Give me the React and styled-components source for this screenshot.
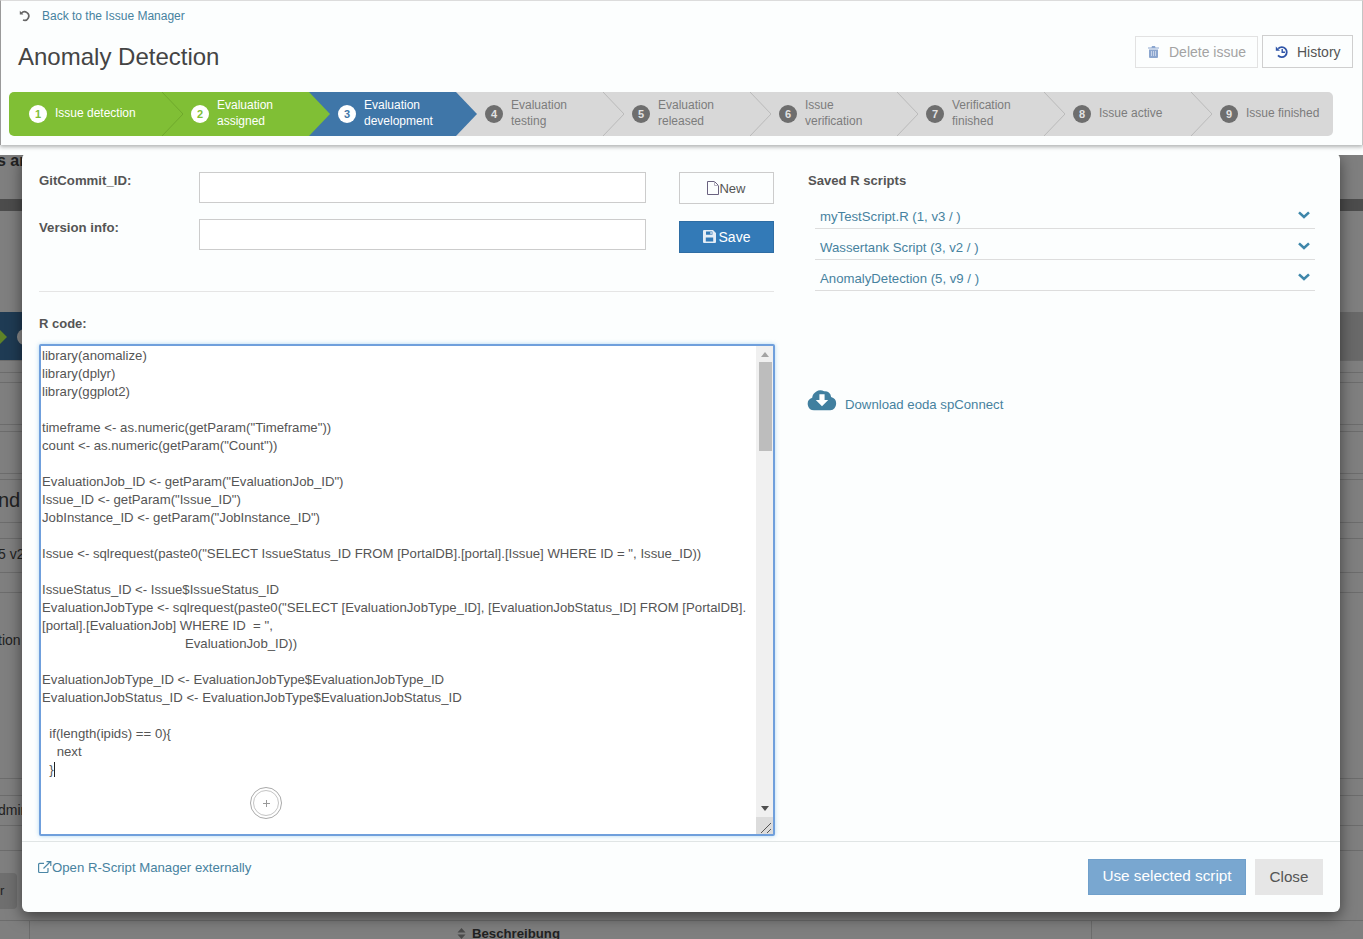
import React from 'react'
import styled, { createGlobalStyle } from 'styled-components'

const GlobalStyle = createGlobalStyle`
  html, body { margin: 0; padding: 0; height: 100%; overflow: hidden; background: #7f7f7f; }
  * { box-sizing: border-box; }
  body { font-family: "Liberation Sans", Arial, sans-serif; font-size: 14px; color: #555; }
`

const steps = [
  { n: 1, label: ['Issue detection'], state: 'done' },
  { n: 2, label: ['Evaluation', 'assigned'], state: 'done' },
  { n: 3, label: ['Evaluation', 'development'], state: 'active' },
  { n: 4, label: ['Evaluation', 'testing'], state: 'todo' },
  { n: 5, label: ['Evaluation', 'released'], state: 'todo' },
  { n: 6, label: ['Issue', 'verification'], state: 'todo' },
  { n: 7, label: ['Verification', 'finished'], state: 'todo' },
  { n: 8, label: ['Issue active'], state: 'todo' },
  { n: 9, label: ['Issue finished'], state: 'todo' },
]

const scripts = ['myTestScript.R (1, v3 / )', 'Wassertank Script (3, v2 / )', 'AnomalyDetection (5, v9 / )']

const dimRules = [360, 372, 382, 424, 431, 473, 479, 522, 538, 572, 592, 778, 795, 825, 850, 920]

const code = `library(anomalize)
library(dplyr)
library(ggplot2)

timeframe <- as.numeric(getParam("Timeframe"))
count <- as.numeric(getParam("Count"))

EvaluationJob_ID <- getParam("EvaluationJob_ID")
Issue_ID <- getParam("Issue_ID")
JobInstance_ID <- getParam("JobInstance_ID")

Issue <- sqlrequest(paste0("SELECT IssueStatus_ID FROM [PortalDB].[portal].[Issue] WHERE ID = ", Issue_ID))

IssueStatus_ID <- Issue$IssueStatus_ID
EvaluationJobType <- sqlrequest(paste0("SELECT [EvaluationJobType_ID], [EvaluationJobStatus_ID] FROM [PortalDB].
[portal].[EvaluationJob] WHERE ID  = ",
                                       EvaluationJob_ID))

EvaluationJobType_ID <- EvaluationJobType$EvaluationJobType_ID
EvaluationJobStatus_ID <- EvaluationJobType$EvaluationJobStatus_ID

  if(length(ipids) == 0){
    next
  }`

function UndoIcon({ size = 14, color = '#666' }) {
  return (
    <svg width={size} height={size} viewBox="0 0 14 14" fill="none" stroke={color} strokeWidth="1.7">
      <path d="M3.4 4.3A4.2 4.2 0 1 1 5 11" />
      <path d="M1.8 1.8v3.6h3.6" fill={color} stroke="none" />
    </svg>
  )
}

function HistoryIcon() {
  return (
    <svg width="14" height="14" viewBox="0 0 14 14" fill="none">
      <path d="M3.2 3.6A5 5 0 1 1 3 10.4" stroke="#2f55a8" strokeWidth="1.8" />
      <path d="M0.8 1.6v4.2H5z" fill="#2f55a8" />
      <path d="M7.2 4v3.3H10" stroke="#2f55a8" strokeWidth="1.4" />
    </svg>
  )
}

function TrashIcon() {
  return (
    <svg width="11" height="12" viewBox="0 0 11 12">
      <path d="M4 0h3l.5 1.4H11v1.2H0V1.4h3.5z" fill="#8ba6cf" />
      <path d="M1 3.4h9V11a1 1 0 0 1-1 1H2a1 1 0 0 1-1-1z" fill="#8ba6cf" />
      <path d="M3.5 5v5M5.5 5v5M7.5 5v5" stroke="#dfe7f3" strokeWidth=".7" />
    </svg>
  )
}

function FileIcon() {
  return (
    <svg width="12" height="14" viewBox="0 0 12 14" fill="none" stroke="#6a6280" strokeWidth="1">
      <path d="M.5.5h7l4 4v9H.5z" />
      <path d="M7.5.5v4h4" stroke="#b5b0c0" />
    </svg>
  )
}

function SaveIcon() {
  return (
    <svg width="13" height="13" viewBox="0 0 13 13">
      <path fillRule="evenodd" d="M1 0h9l3 3v9a1 1 0 0 1-1 1H1a1 1 0 0 1-1-1V1a1 1 0 0 1 1-1zm2 1.4v3.4h6.4V1.4zM2.8 7.4v4.2h7.4V7.4z" fill="#e4edf6" />
      <path d="M7.4 1.9h1.3v2.3H7.4z" fill="#e4edf6" />
    </svg>
  )
}

function ChevronIcon() {
  return (
    <svg width="12" height="8" viewBox="0 0 12 8" fill="none" stroke="#3e87aa" strokeWidth="2.6">
      <path d="M1 1.4l5 4.6 5-4.6" />
    </svg>
  )
}

function CloudIcon() {
  return (
    <svg width="30" height="23" viewBox="0 0 29 22">
      <path d="M7 21.5a6.2 6.2 0 0 1-2-12.1A8 8 0 0 1 16.5 3a6 6 0 0 1 6.8 5.6A6.6 6.6 0 0 1 22.500 21.500z" fill="#417f9f" />
      <path d="M12 6h5v5.500h3.500l-6 6-6-6H12z" fill="#fff" />
    </svg>
  )
}

function ExternalIcon() {
  return (
    <svg width="14" height="12" viewBox="0 0 14 12" fill="none" stroke="#4b87a6" strokeWidth="1.200">
      <path d="M10 7v3.500a1 1 0 0 1-1 1H1.600a1 1 0 0 1-1-1V3.400a1 1 0 0 1 1-1H6" />
      <path d="M5.500 7.500L12 1M8.500.7h4.300V5" />
    </svg>
  )
}

export default function App() {
  return (
    <Page>
      <GlobalStyle />
      <DimText $top={152} $left={-3} $size={16}>s ar</DimText>
      <DimBand $top={199} $h={12} $color="#4c4c4c" />
      <DimBand $top={312} $h={48} $color="#696969" />
      <BlueStub>
        <svg width="22" height="48" viewBox="0 0 22 48">
          <path d="M0 18l7 7-7 7z" fill="#5f8227" />
          <circle cx="25" cy="25" r="8" fill="#8a8a8a" />
        </svg>
      </BlueStub>
      {dimRules.map((y) => <DimRule key={y} $top={y} />)}
      <DimText $top={489} $left={-2} $weight={400} $size={20}>nd</DimText>
      <DimText $top={546} $left={-2} $weight={400}>5 v2</DimText>
      <DimText $top={632} $left={-2} $weight={400}>tion</DimText>
      <DimText $top={802} $left={-2} $weight={400}>dmin</DimText>
      <DimChip>r</DimChip>
      <DimCell />
      <DimHeading>
        <svg width="9" height="11" viewBox="0 0 9 11" fill="#4a4a4a">
          <path d="M4.500 0L8.500 4.500H.5zM4.500 11L.5 6.500h8z" />
        </svg>
        Beschreibung
      </DimHeading>

      <Modal>
        <ModalBody>
          <LeftColumn>
            <FieldGrid>
              <FieldLabel>GitCommit_ID:</FieldLabel>
              <TextInput />
              <GhostButton><FileIcon />New</GhostButton>
              <FieldLabel>Version info:</FieldLabel>
              <TextInput />
              <PrimaryButton><SaveIcon /> Save</PrimaryButton>
            </FieldGrid>
            <Divider />
            <CodeLabel>R code:</CodeLabel>
            <CodeBox>
              <CodeText>{code}<Caret /></CodeText>
              <CursorRing>
                <svg width="7" height="7" viewBox="0 0 7 7" stroke="#999" strokeWidth="1">
                  <path d="M3.500 0v7M0 3.500h7" />
                </svg>
              </CursorRing>
              <ScrollTrack>
                <ArrowUp />
                <ScrollThumb />
                <ArrowDown />
              </ScrollTrack>
              <ResizeCorner>
                <svg width="17" height="17" viewBox="0 0 17 17" stroke="#555" strokeWidth="1">
                  <path d="M5 16L15 6M11 16l4-4" />
                </svg>
              </ResizeCorner>
            </CodeBox>
          </LeftColumn>
          <RightColumn>
            <SavedTitle>Saved R scripts</SavedTitle>
            <ScriptList>
              {scripts.map((s) => (
                <ScriptRow key={s}>
                  <ScriptName>{s}</ScriptName>
                  <ChevronIcon />
                </ScriptRow>
              ))}
            </ScriptList>
            <DownloadLink>
              <CloudIcon />
              <span>Download eoda spConnect</span>
            </DownloadLink>
          </RightColumn>
        </ModalBody>
        <ModalFooter>
          <ExternalLink><ExternalIcon />Open R-Script Manager externally</ExternalLink>
          <FooterButtons>
            <UseButton>Use selected script</UseButton>
            <CloseButton>Close</CloseButton>
          </FooterButtons>
        </ModalFooter>
      </Modal>

      <TopStrip>
        <TopPanel>
          <BackLink><UndoIcon /><span>Back to the Issue Manager</span></BackLink>
          <TitleRow>
            <Title>Anomaly Detection</Title>
            <Actions>
              <DeleteButton><TrashIcon /><span>Delete issue</span></DeleteButton>
              <HistoryButton><HistoryIcon /><span>History</span></HistoryButton>
            </Actions>
          </TitleRow>
          <Stepper>
            {steps.map((s, i) => (
              <Step key={s.n} $state={s.state} $first={i === 0} $last={i === steps.length - 1}>
                <StepNumber $state={s.state}>{s.n}</StepNumber>
                <StepLabel $state={s.state}>
                  {s.label.map((l) => <div key={l}>{l}</div>)}
                </StepLabel>
                {i < steps.length - 1 && (
                  <StepArrow viewBox="0 0 22 44" preserveAspectRatio="none" $z={steps.length - i}>
                    <path
                      d="M0 0L22 22L0 44z"
                      fill={s.state === 'done' ? '#80bf35' : s.state === 'active' ? '#3f76a8' : '#d8d8d8'}
                    />
                    {!(s.state === 'active' || steps[i + 1].state === 'active') && (
                      <path
                        d="M0 0L22 22L0 44"
                        fill="none"
                        stroke={s.state === 'done' ? '#6fa82c' : '#b9b9b9'}
                        strokeWidth="1"
                      />
                    )}
                  </StepArrow>
                )}
              </Step>
            ))}
          </Stepper>
        </TopPanel>
      </TopStrip>
    </Page>
  )
}

const Page = styled.div`
  position: relative;
  width: 1363px;
  height: 939px;
  overflow: hidden;
  background: #7f7f7f;
`

// what shows of the dimmed page behind the modal
const DimText = styled.div`
  position: absolute;
  top: ${(p) => p.$top}px;
  left: ${(p) => p.$left}px;
  font-size: ${(p) => p.$size || 14}px;
  font-weight: ${(p) => p.$weight || 700};
  color: #222;
  white-space: nowrap;
`

const DimBand = styled.div`
  position: absolute;
  top: ${(p) => p.$top}px;
  left: 0;
  right: 0;
  height: ${(p) => p.$h}px;
  background: ${(p) => p.$color};
`

const BlueStub = styled.div`
  position: absolute;
  top: 312px;
  left: 0;
  width: 22px;
  height: 48px;
  background: #1f3b54;
  line-height: 0;
`

const DimRule = styled.div`
  position: absolute;
  top: ${(p) => p.$top}px;
  left: 0;
  right: 0;
  height: 1px;
  background: #6c6c6c;
`

const DimChip = styled.div`
  position: absolute;
  top: 873px;
  left: -6px;
  width: 23px;
  height: 36px;
  padding: 10px 0 0 6px;
  border-radius: 4px;
  background: #6f6f6f;
  color: #222;
  font-size: 13px;
`

const DimCell = styled.div`
  position: absolute;
  top: 921px;
  left: 29px;
  width: 1063px;
  height: 18px;
  border-left: 1px solid #6c6c6c;
  border-right: 1px solid #6c6c6c;
`

const DimHeading = styled.div`
  position: absolute;
  top: 926px;
  left: 457px;
  display: flex;
  align-items: center;
  gap: 6px;
  font-size: 13.200px;
  font-weight: 700;
  color: #222;
`

const TopStrip = styled.div`
  position: absolute;
  top: 0;
  left: 0;
  right: 0;
  height: 155px;
  background: #fcfefe;
`

const TopPanel = styled.div`
  height: 145px;
  padding: 0 9px 0 8px;
  background: #fcfefe;
  border-top: 1px solid #dcdcdc;
  border-left: 1px solid #9a9a9a;
  border-right: 1px solid #c4c4c4;
  box-shadow: 0 2px 4px rgba(0, 0, 0, 0.3);
`

const BackLink = styled.div`
  display: flex;
  align-items: center;
  gap: 10px;
  height: 30px;
  padding-left: 9px;
  font-size: 12px;
  color: #47829f;
`

const TitleRow = styled.div`
  display: flex;
  justify-content: space-between;
  align-items: flex-start;
  height: 61px;
  padding-left: 9px;
`

const Title = styled.h1`
  margin: 11px 0 0;
  font-size: 24px;
  font-weight: 400;
  line-height: 30px;
  color: #444;
`

const Actions = styled.div`
  display: flex;
  align-items: flex-start;
  gap: 4px;
  margin-top: 4px;
`

const DeleteButton = styled.div`
  display: flex;
  align-items: center;
  gap: 10px;
  width: 123px;
  height: 32px;
  margin-top: 1px;
  padding-left: 12px;
  border: 1px solid #e2e2e2;
  font-size: 14px;
  color: #a3a3a3;
`

const HistoryButton = styled.div`
  display: flex;
  align-items: center;
  gap: 8px;
  width: 91px;
  height: 33px;
  padding-left: 12px;
  border: 1px solid #cfcfcf;
  font-size: 14px;
  color: #555;
`

const Stepper = styled.div`
  display: flex;
  width: 1324px;
  height: 44px;
`

const Step = styled.div`
  position: relative;
  display: flex;
  align-items: center;
  gap: 8px;
  padding-left: ${(p) => (p.$first ? 20 : 29)}px;
  flex: 0 0 ${(p) => (p.$first ? 153 : p.$last ? 142 : 147)}px;
  background: ${(p) => (p.$state === 'done' ? '#80bf35' : p.$state === 'active' ? '#3f76a8' : '#d8d8d8')};
  border-radius: ${(p) => (p.$first ? '5px 0 0 5px' : p.$last ? '0 5px 5px 0' : '0')};
`

const StepNumber = styled.div`
  display: flex;
  align-items: center;
  justify-content: center;
  flex: none;
  width: 18px;
  height: 18px;
  border-radius: 50%;
  font-size: 11px;
  font-weight: 700;
  background: ${(p) => (p.$state === 'todo' ? '#6e6e6e' : '#fff')};
  color: ${(p) => (p.$state === 'done' ? '#80bf35' : p.$state === 'active' ? '#3f76a8' : '#e2e2e2')};
`

const StepLabel = styled.div`
  margin-top: -2px;
  font-size: 12px;
  line-height: 16px;
  color: ${(p) => (p.$state === 'todo' ? '#7c7c7c' : '#fff')};
`

const StepArrow = styled.svg`
  position: absolute;
  top: 0;
  right: -21px;
  width: 21px;
  height: 44px;
  z-index: ${(p) => p.$z};
`

const Modal = styled.div`
  position: absolute;
  top: 153px;
  left: 22px;
  width: 1318px;
  height: 759px;
  display: flex;
  flex-direction: column;
  background: #fcfefe;
  border-radius: 6px;
  box-shadow: 0 5px 15px rgba(0, 0, 0, 0.5);
`

const ModalBody = styled.div`
  display: flex;
  flex: 1;
  min-height: 0;
  border-bottom: 1px solid #e0e5e5;
`

const LeftColumn = styled.div`
  width: 752px;
  padding: 19px 0 0 17px;
`

const FieldGrid = styled.div`
  display: grid;
  grid-template-columns: 160px 447px 95px;
  grid-template-rows: 32px 32px;
  row-gap: 15px;
  height: 119px;
`

const FieldLabel = styled.div`
  padding-top: 1px;
  font-size: 13.200px;
  font-weight: 700;
  color: #555;
`

const TextInput = styled.div`
  width: 447px;
  height: 31px;
  border: 1px solid #ccc;
  background: #fff;
`

const GhostButton = styled.div`
  display: flex;
  align-items: center;
  justify-content: center;
  margin-left: 33px;
  width: 95px;
  height: 32px;
  border: 1px solid #ccc;
  font-size: 13px;
  color: #555;
`

const PrimaryButton = styled.div`
  display: flex;
  align-items: center;
  justify-content: center;
  gap: 3px;
  margin: 2px 0 0 33px;
  width: 95px;
  height: 32px;
  padding-bottom: 1px;
  background: #337ab7;
  border: 1px solid #2e6da4;
  font-size: 14px;
  color: #fff;
`

const Divider = styled.div`
  width: 735px;
  height: 1px;
  background: #e5e5e5;
`

const CodeLabel = styled.div`
  margin: 24px 0 13px;
  font-size: 13px;
  font-weight: 700;
  line-height: 15px;
  color: #555;
`

const CodeBox = styled.div`
  position: relative;
  width: 736px;
  height: 492px;
  background: #fff;
  border: 2px solid #6f9fdc;
  border-radius: 2px;
  box-shadow: 0 0 4px rgba(102, 175, 233, 0.5);
`

const CodeText = styled.pre`
  margin: 0;
  padding: 1px 0 0 1px;
  width: 716px;
  font-family: "Liberation Sans", Arial, sans-serif;
  font-size: 13.200px;
  line-height: 18px;
  color: #555;
  white-space: pre-wrap;
`

const Caret = styled.span`
  display: inline-block;
  width: 1px;
  height: 15px;
  vertical-align: -3px;
  background: #222;
`

const CursorRing = styled.div`
  position: absolute;
  left: 209px;
  top: 441px;
  display: flex;
  align-items: center;
  justify-content: center;
  width: 32px;
  height: 32px;
  border: 1px solid #aaa;
  border-radius: 50%;
  outline: 1px solid #c4c4c4;
  outline-offset: -4px;
`

const ScrollTrack = styled.div`
  position: absolute;
  top: 0;
  right: 0;
  bottom: 17px;
  width: 17px;
  display: flex;
  flex-direction: column;
  align-items: center;
  background: #f0f0f0;
`

const ArrowUp = styled.div`
  margin: 6px 0 5px;
  width: 0;
  height: 0;
  border-left: 4px solid transparent;
  border-right: 4px solid transparent;
  border-bottom: 5px solid #a3a3a3;
`

const ScrollThumb = styled.div`
  width: 13px;
  height: 89px;
  margin-left: 1px;
  background: #bdbdbd;
`

const ArrowDown = styled.div`
  margin-top: auto;
  margin-bottom: 6px;
  width: 0;
  height: 0;
  border-left: 4px solid transparent;
  border-right: 4px solid transparent;
  border-top: 5px solid #505050;
`

const ResizeCorner = styled.div`
  position: absolute;
  right: 0;
  bottom: 0;
  width: 17px;
  height: 17px;
  background: #dcdcdc;
  line-height: 0;
`

const RightColumn = styled.div`
  flex: 1;
  padding: 20px 25px 0 34px;
`

const SavedTitle = styled.div`
  font-size: 13.100px;
  font-weight: 700;
  line-height: 16px;
  color: #555;
`

const ScriptList = styled.div`
  margin: 9px 0 0 7px;
`

const ScriptRow = styled.div`
  display: flex;
  align-items: center;
  justify-content: space-between;
  height: 31px;
  padding: 4px 5px 0 5px;
  border-bottom: 1px solid #ddd;
`

const ScriptName = styled.span`
  margin-top: 2px;
  font-size: 13.200px;
  color: #47829f;
`

const DownloadLink = styled.div`
  display: flex;
  align-items: flex-start;
  gap: 8px;
  margin: 97px 0 0 -1px;
  font-size: 13.200px;
  line-height: 16px;
  color: #47829f;

  span {
    margin-top: 9px;
  }
`

const ModalFooter = styled.div`
  display: flex;
  justify-content: space-between;
  height: 70px;
  padding: 17px 17px 0 16px;
`

const ExternalLink = styled.div`
  display: flex;
  align-items: center;
  height: 16px;
  font-size: 13.200px;
  color: #47829f;
`

const FooterButtons = styled.div`
  display: flex;
  gap: 9px;
`

const UseButton = styled.div`
  display: flex;
  align-items: center;
  justify-content: center;
  width: 158px;
  height: 36px;
  padding-bottom: 2px;
  background: #79a7d0;
  border: 1px solid #70a0cb;
  font-size: 15.300px;
  color: #fff;
`

const CloseButton = styled.div`
  display: flex;
  align-items: center;
  justify-content: center;
  width: 68px;
  height: 36px;
  padding-bottom: 2px;
  background: #e6e6e6;
  font-size: 15.200px;
  color: #555;
`
